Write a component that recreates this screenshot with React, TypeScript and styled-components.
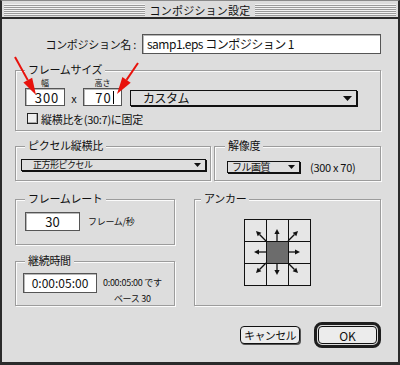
import React from 'react'
import styled, { createGlobalStyle } from 'styled-components'

const GlobalStyle = createGlobalStyle`
  html, body {
    margin: 0;
    padding: 0;
    background: #ffffff;
  }
  body {
    font-family: 'Noto Sans CJK JP', 'Noto Sans', sans-serif;
    color: #111;
  }
`

const Window = styled.div`
  position: relative;
  width: 400px;
  height: 365px;
  box-sizing: border-box;
  background: #dddddd;
  border: 2px solid #2b2b2b;
  border-top: 1px solid #8a8a8a;
  border-bottom-width: 3px;
  display: flex;
  flex-direction: column;
`

const TitleBar = styled.div`
  height: 18px;
  box-sizing: border-box;
  padding: 3px 2px;
  border-bottom: 2px solid #2b2b2b;
  background: #dcdcdc;
`

const Stripes = styled.div`
  height: 12px;
  display: flex;
  justify-content: center;
  align-items: center;
  background: repeating-linear-gradient(to bottom, #f2f2f2 0 1px, #9a9a9a 1px 2px);
`

const TitleText = styled.span`
  background: #dcdcdc;
  padding: 0 5px;
  font-size: 11px;
  line-height: 14px;
  letter-spacing: 0.2px;
  color: #111;
`

const Body = styled.div`
  flex: 1;
  padding: 15px 17px 0 13px;
  display: flex;
  flex-direction: column;
`

const NameRow = styled.div`
  display: flex;
  justify-content: flex-end;
  align-items: center;
  gap: 6px;
  height: 20px;
`

const Label = styled.span<{ $size?: number }>`
  font-size: ${p => p.$size ?? 11}px;
  letter-spacing: -0.3px;
  white-space: nowrap;
`

const TextBox = styled.div<{ $w: number; $h: number; $size: number; $align?: string }>`
  width: ${p => p.$w}px;
  height: ${p => p.$h}px;
  box-sizing: border-box;
  background: #ffffff;
  border: 1px solid #555;
  box-shadow: inset 1px 1px 0 #b8b8b8;
  display: flex;
  align-items: center;
  justify-content: ${p => p.$align ?? 'flex-start'};
  padding: 0 4px;
  font-size: ${p => p.$size}px;
  line-height: ${p => p.$h - 4}px;
  white-space: nowrap;
  overflow: hidden;
`

const SizeBox = styled(TextBox)`
  align-items: flex-start;
  line-height: 18px;
`

const NameText = styled.span`
  letter-spacing: -0.5px;
`

const Caret = styled.span`
  display: inline-block;
  width: 1px;
  height: 13px;
  margin: 2px 0 0 1px;
  background: #000;
`

const Group = styled.div<{ $h: number; $pad: string; $w?: number; $mt?: number }>`
  position: relative;
  box-sizing: border-box;
  height: ${p => p.$h}px;
  width: ${p => (p.$w ? `${p.$w}px` : 'auto')};
  margin-top: ${p => p.$mt ?? 0}px;
  padding: ${p => p.$pad};
  border: 1px solid #9c9c9c;
  box-shadow: inset 1px 1px 0 #fbfbfb, 1px 1px 0 #fbfbfb;
`

const Legend = styled.span<{ $x: number }>`
  position: absolute;
  top: -8px;
  left: ${p => p.$x}px;
  padding: 0 3px;
  background: #dddddd;
  font-size: 11px;
  line-height: 12px;
  letter-spacing: -0.3px;
`

const SizeRow = styled.div`
  display: flex;
  align-items: flex-end;
`

const Field = styled.div`
  display: flex;
  flex-direction: column;
  align-items: center;
  gap: 1px;
`

const FieldLabel = styled.span`
  font-size: 8px;
  line-height: 9px;
  height: 9px;
`

const Times = styled.span`
  width: 6px;
  margin: 0 6px;
  height: 16px;
  font-size: 11px;
  line-height: 16px;
  text-align: center;
`

const BigDigits = styled.span`
  letter-spacing: 1px;
  padding-left: 4px;
`

const Popup = styled.div<{ $w: number; $h: number; $size: number; $pl: number; $ml?: number }>`
  width: ${p => p.$w}px;
  height: ${p => p.$h}px;
  margin-left: ${p => p.$ml ?? 0}px;
  box-sizing: border-box;
  background: #dedede;
  border: 1px solid #111;
  box-shadow: 1px 1px 0 #111;
  display: flex;
  align-items: center;
  justify-content: space-between;
  padding: 0 4px 0 ${p => p.$pl}px;
  font-size: ${p => p.$size}px;
  line-height: ${p => p.$h - 2}px;
  letter-spacing: -0.5px;
  white-space: nowrap;
`

const CheckRow = styled.div`
  display: flex;
  align-items: center;
  gap: 3px;
  margin-top: 7px;
  padding-left: 2px;
  height: 11px;
`

const Checkbox = styled.span`
  width: 11px;
  height: 11px;
  box-sizing: border-box;
  border: 1px solid #222;
  background: #eeeeee;
  box-shadow: inset -1px -1px 0 #aaa;
`

const TwoCol = styled.div`
  display: flex;
  gap: 3px;
  margin-top: 15px;
`

const ResRow = styled.div`
  display: flex;
  align-items: center;
  gap: 10px;
`

const BottomGrid = styled.div`
  display: flex;
  gap: 19px;
  margin-top: 18px;
`

const LeftCol = styled.div`
  display: flex;
  flex-direction: column;
  gap: 16px;
  width: 160px;
`

const InputRow = styled.div<{ $gap: number }>`
  display: flex;
  align-items: center;
  gap: ${p => p.$gap}px;
`

const DurationRow = styled.div`
  display: flex;
  align-items: flex-start;
  gap: 6px;
`

const DurationInfo = styled.div`
  display: flex;
  flex-direction: column;
  gap: 4px;
  padding-top: 4px;
  text-align: center;
  font-size: 9px;
  line-height: 12px;
  letter-spacing: -0.3px;
  white-space: nowrap;
`

const AnchorGroup = styled(Group)`
  flex: 1;
`

const ButtonRow = styled.div`
  display: flex;
  justify-content: flex-end;
  align-items: center;
  gap: 14px;
  margin-top: 16px;
  height: 26px;
`

const Button = styled.div`
  width: 60px;
  height: 18px;
  box-sizing: border-box;
  border: 1px solid #111;
  border-radius: 4px;
  background: #ececec;
  box-shadow: 1px 1px 0 #555;
  display: flex;
  align-items: center;
  justify-content: center;
  font-size: 11px;
  letter-spacing: -0.6px;
`

const DefaultRing = styled.div`
  width: 67px;
  height: 26px;
  box-sizing: border-box;
  border: 3px solid #1e1e1e;
  border-radius: 8px;
  padding: 1px;
  background: #dddddd;
  display: flex;
`

const DefaultButton = styled.div`
  flex: 1;
  border: 1px solid #111;
  border-radius: 4px;
  background: #ececec;
  display: flex;
  align-items: center;
  justify-content: center;
  font-size: 12px;
`

const Overlay = styled.svg`
  position: absolute;
  left: -2px;
  top: -1px;
  pointer-events: none;
`

const Triangle = ({ w, h }: { w: number; h: number }) => (
  <svg width={w} height={h} viewBox={`0 0 ${w} ${h}`}>
    <polygon points={`0,0 ${w},0 ${w / 2},${h}`} fill="#111" />
  </svg>
)

type Pt = [number, number]

const arrowHead = (from: Pt, tip: Pt, len: number, half: number) => {
  const dx = tip[0] - from[0]
  const dy = tip[1] - from[1]
  const d = Math.hypot(dx, dy)
  const ux = dx / d
  const uy = dy / d
  const bx = tip[0] - ux * len
  const by = tip[1] - uy * len
  const px = -uy
  const py = ux
  return {
    base: [bx, by] as Pt,
    points: `${tip[0]},${tip[1]} ${bx + px * half},${by + py * half} ${bx - px * half},${by - py * half}`,
  }
}

const anchorArrows: [Pt, Pt][] = [
  [[33, 22], [33, 10]],
  [[33, 44], [33, 56]],
  [[22, 33], [10, 33]],
  [[44, 33], [56, 33]],
  [[22, 22], [12, 12]],
  [[44, 22], [54, 12]],
  [[22, 44], [12, 54]],
  [[44, 44], [54, 54]],
]

const AnchorGrid = () => {
  const cells = []
  for (let r = 0; r < 3; r++) {
    for (let c = 0; c < 3; c++) {
      const center = r === 1 && c === 1
      cells.push(
        <rect
          key={`${r}-${c}`}
          x={1 + c * 22}
          y={1 + r * 22}
          width={21}
          height={21}
          fill={center ? '#6c6c6c' : '#e6e6e6'}
        />,
      )
    }
  }
  return (
    <svg width={67} height={67} viewBox="0 0 67 67">
      <rect x={0} y={0} width={67} height={67} fill="#111" />
      {cells}
      {anchorArrows.map(([a, b], i) => {
        const head = arrowHead(a, b, 5, 2.6)
        return (
          <g key={i}>
            <line x1={a[0]} y1={a[1]} x2={head.base[0]} y2={head.base[1]} stroke="#111" strokeWidth={1.3} />
            <polygon points={head.points} fill="#111" />
          </g>
        )
      })}
    </svg>
  )
}

const RedArrow = ({ from, tip }: { from: Pt; tip: Pt }) => {
  const head = arrowHead(from, tip, 17, 5)
  return (
    <g>
      <line x1={from[0]} y1={from[1]} x2={head.base[0]} y2={head.base[1]} stroke="#e8120c" strokeWidth={2} />
      <polygon points={head.points} fill="#e8120c" />
    </g>
  )
}

export default function App() {
  return (
    <>
      <GlobalStyle />
      <Window>
        <TitleBar>
          <Stripes>
            <TitleText>コンポジション設定</TitleText>
          </Stripes>
        </TitleBar>
        <Body>
          <NameRow>
            <Label>コンポジション名 :</Label>
            <TextBox $w={239} $h={20} $size={12}>
              <NameText>samp1.eps コンポジション 1</NameText>
            </TextBox>
          </NameRow>

          <Group $h={61} $pad="7px 9px" $mt={16}>
            <Legend $x={9}>フレームサイズ</Legend>
            <SizeRow>
              <Field>
                <FieldLabel>幅</FieldLabel>
                <SizeBox $w={40} $h={18} $size={13} $align="center">
                  <BigDigits>300</BigDigits>
                </SizeBox>
              </Field>
              <Times>x</Times>
              <Field>
                <FieldLabel>高さ</FieldLabel>
                <SizeBox $w={39} $h={18} $size={13} $align="center">
                  <BigDigits>70</BigDigits>
                  <Caret />
                </SizeBox>
              </Field>
              <Popup $w={227} $h={16} $size={12} $pl={12} $ml={8}>
                カスタム
                <Triangle w={9} h={5} />
              </Popup>
            </SizeRow>
            <CheckRow>
              <Checkbox />
              <Label>縦横比を(30:7)に固定</Label>
            </CheckRow>
          </Group>

          <TwoCol>
            <Group $h={35} $w={196} $pad="12px 5px">
              <Legend $x={9}>ピクセル縦横比</Legend>
              <Popup $w={185} $h={12} $size={9} $pl={11}>
                正方形ピクセル
                <Triangle w={7} h={4} />
              </Popup>
            </Group>
            <Group $h={35} $pad="12px 12px" style={{ flex: 1 }}>
              <Legend $x={10}>解像度</Legend>
              <ResRow>
                <Popup $w={73} $h={12} $size={10} $pl={4}>
                  フル画質
                  <Triangle w={7} h={4} />
                </Popup>
                <Label $size={11}>(300 x 70)</Label>
              </ResRow>
            </Group>
          </TwoCol>

          <BottomGrid>
            <LeftCol>
              <Group $h={46} $pad="12px 9px">
                <Legend $x={9}>フレームレート</Legend>
                <InputRow $gap={8}>
                  <TextBox $w={55} $h={19} $size={13} $align="center">
                    30
                  </TextBox>
                  <Label $size={9}>フレーム/秒</Label>
                </InputRow>
              </Group>
              <Group $h={45} $pad="11px 7px 0">
                <Legend $x={9}>継続時間</Legend>
                <DurationRow>
                  <TextBox $w={74} $h={20} $size={12} $align="center">
                    0:00:05:00
                  </TextBox>
                  <DurationInfo>
                    <span>0:00:05:00 です</span>
                    <span>ベース 30</span>
                  </DurationInfo>
                </DurationRow>
              </Group>
            </LeftCol>
            <AnchorGroup $h={107} $pad="19px 49px">
              <Legend $x={6}>アンカー</Legend>
              <AnchorGrid />
            </AnchorGroup>
          </BottomGrid>

          <ButtonRow>
            <Button>キャンセル</Button>
            <DefaultRing>
              <DefaultButton>OK</DefaultButton>
            </DefaultRing>
          </ButtonRow>
        </Body>
        <Overlay width={400} height={365} viewBox="0 0 400 365">
          <RedArrow from={[15, 57]} tip={[36, 95]} />
          <RedArrow from={[138, 63]} tip={[117, 94]} />
        </Overlay>
      </Window>
    </>
  )
}
